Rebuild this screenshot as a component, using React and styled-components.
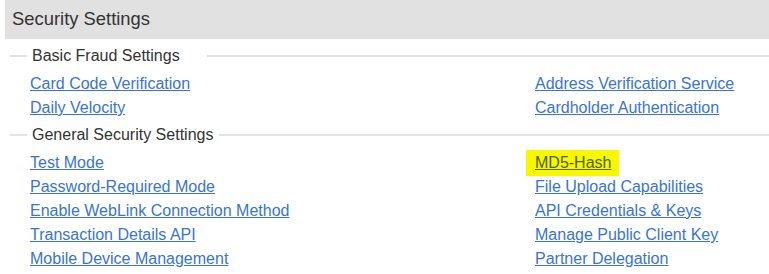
import React from 'react';
import styled, { createGlobalStyle } from 'styled-components';

const GlobalStyle = createGlobalStyle`
  body {
    margin: 0;
    background: #ffffff;
    font-family: "Liberation Sans", Arial, sans-serif;
  }
`;

const Page = styled.div`
  padding-left: 5px;
`;

const Header = styled.div`
  height: 39px;
  line-height: 38px;
  padding-left: 7px;
  background-color: #e1e1e1;
  color: #333333;
  font-size: 18.4px;
`;

const Section = styled.fieldset`
  margin: ${({ top }) => top}px 0 0 5px;
  padding: 0;
  border: none;
  border-top: 2px solid #e3e3e3;
  min-width: 0;
`;

const Legend = styled.legend`
  margin-left: 17px;
  padding: 0 ${({ gap }) => gap}px 0 5px;
  line-height: 22px;
  font-size: 16px;
  color: #333333;
`;

const Links = styled.div`
  display: grid;
  grid-template-columns: 505px 1fr;
  grid-auto-flow: column;
  grid-template-rows: ${({ rows }) => `repeat(${rows}, 24px)`};
  padding: 5px 0 0 20px;
`;

const Link = styled.a`
  align-self: center;
  justify-self: start;
  font-size: 16px;
  line-height: 18px;
  color: #3a74cf;
  text-decoration: underline;
  cursor: pointer;
`;

const Highlight = styled.span`
  display: inline-block;
  margin: -4px 0 -4px -9px;
  padding: 4px 8px 4px 9px;
  background-color: #f7f700;
  color: #4f6400;
  text-decoration: underline;
`;

const sections = [
  {
    title: 'Basic Fraud Settings',
    top: 6,
    gap: 27,
    left: ['Card Code Verification', 'Daily Velocity'],
    right: ['Address Verification Service', 'Cardholder Authentication'],
  },
  {
    title: 'General Security Settings',
    top: 4,
    gap: 6,
    left: [
      'Test Mode',
      'Password-Required Mode',
      'Enable WebLink Connection Method',
      'Transaction Details API',
      'Mobile Device Management',
    ],
    right: [
      'MD5-Hash',
      'File Upload Capabilities',
      'API Credentials & Keys',
      'Manage Public Client Key',
      'Partner Delegation',
    ],
  },
];

export default function App() {
  return (
    <>
      <GlobalStyle />
      <Page>
        <Header>Security Settings</Header>
        {sections.map((s) => (
          <Section key={s.title} top={s.top}>
            <Legend gap={s.gap}>{s.title}</Legend>
            <Links rows={s.left.length}>
              {[...s.left, ...s.right].map((label) => (
                <Link key={label}>
                  {label === 'MD5-Hash' ? <Highlight>{label}</Highlight> : label}
                </Link>
              ))}
            </Links>
          </Section>
        ))}
      </Page>
    </>
  );
}
